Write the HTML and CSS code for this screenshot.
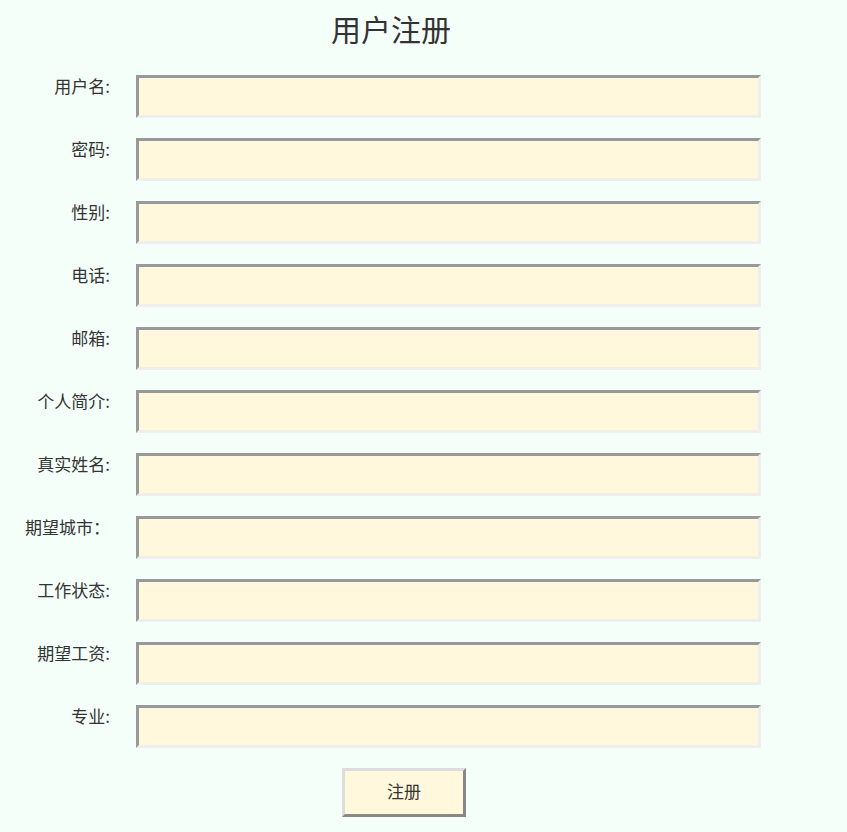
FILE: index.html
```html
<!DOCTYPE html>
<html lang="zh-CN">
<head>
<meta charset="utf-8">
<title>用户注册</title>
<link rel="stylesheet" href="styles.css">
</head>
<body>
<div class="page">
  <h1 class="title">用户注册</h1>
  <form class="form">
    <label class="lbl">用户名:</label><input class="field" type="text">
    <label class="lbl">密码:</label><input class="field" type="text">
    <label class="lbl">性别:</label><input class="field" type="text">
    <label class="lbl">电话:</label><input class="field" type="text">
    <label class="lbl">邮箱:</label><input class="field" type="text">
    <label class="lbl">个人简介:</label><input class="field" type="text">
    <label class="lbl">真实姓名:</label><input class="field" type="text">
    <label class="lbl">期望城市：</label><input class="field" type="text">
    <label class="lbl">工作状态:</label><input class="field" type="text">
    <label class="lbl">期望工资:</label><input class="field" type="text">
    <label class="lbl">专业:</label><input class="field" type="text">
    <span></span><div class="actions"><button class="btn" type="button">注册</button></div>
  </form>
</div>
</body>
</html>
```
FILE: styles.css
```css
html, body {
  background: #f5fffa;
}
body {
  margin: 8px;
  font-family: "Noto Sans CJK SC", "Noto Sans", sans-serif;
  color: #333;
}
.page {
  width: 766px;
}
.title {
  margin: 0;
  font-size: 30px;
  font-weight: normal;
  line-height: 40px;
  text-align: center;
  color: #333;
}
.form {
  display: grid;
  grid-template-columns: 102px 625px;
  column-gap: 26px;
  row-gap: 20px;
  margin-top: 27px;
}
.lbl {
  font-size: 17px;
  line-height: 22px;
  text-align: right;
  white-space: nowrap;
}
.field {
  box-sizing: border-box;
  width: 625px;
  height: 43px;
  margin: 0;
  border: 3px solid #eee;
  border-top-color: #999;
  border-left-color: #999;
  background: #fff8dc;
  font-size: 16px;
}
.actions {
  padding-left: 206px;
}
.btn {
  box-sizing: border-box;
  width: 124px;
  height: 49px;
  margin: 0;
  padding: 0 0 4px;
  border: 3px solid #ddd;
  border-right-color: #888;
  border-bottom-color: #888;
  background: #fff8dc;
  font-family: "Noto Sans CJK SC", sans-serif;
  font-size: 17px;
  color: #333;
}
```
